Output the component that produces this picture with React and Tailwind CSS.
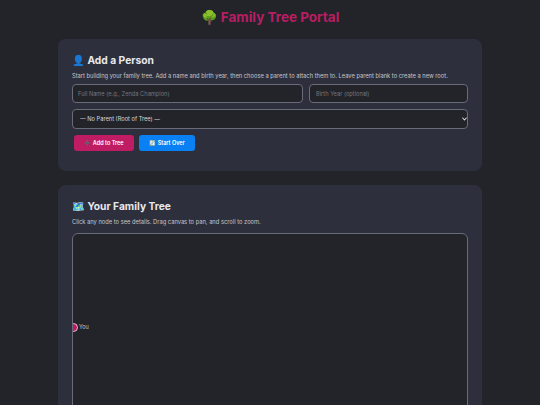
export default function App() {
  return (
    <div className="h-screen overflow-hidden bg-[#23242a] px-[58px] font-['Inter','Liberation_Sans',sans-serif] text-[#e6e6ea]">
      <h1 className="pt-[8px] h-[39px] text-center text-[13.5px] leading-[18px] font-bold text-[#b81d62]">🌳 Family Tree Portal</h1>
      <section className="rounded-[8px] bg-[#2d303c] h-[132px] px-[14px] pt-[14px]">
        <h2 className="text-[10.25px] leading-[14px] font-bold text-[#e8e8ec]">👤 Add a Person</h2>
        <p className="mt-[4px] text-[5.75px] leading-[10px] text-[#c4c5cc] whitespace-nowrap">Start building your family tree. Add a name and birth year, then choose a parent to attach them to. Leave parent blank to create a new root.</p>
        <div className="mt-[3px] flex gap-[6px]">
          <input readOnly placeholder="Full Name (e.g., Zenda Champion)" className="w-[231px] h-[19px] rounded-[4px] border border-[#686b78] bg-[#23242a] px-[5px] text-[5.7px] placeholder:text-[#75767e] outline-none" />
          <input readOnly placeholder="Birth Year (optional)" className="w-[159px] h-[19px] rounded-[4px] border border-[#686b78] bg-[#23242a] px-[6px] text-[5.7px] placeholder:text-[#75767e] outline-none" />
        </div>
        <div className="relative mt-[6px] w-[396px]">
          <select className="block w-full h-[20px] appearance-none rounded-[4px] border border-[#686b78] bg-[#23242a] px-[7px] text-[5.7px] text-[#d8d8dc] outline-none">
            <option>— No Parent (Root of Tree) —</option>
          </select>
          <svg className="absolute right-[1px] top-[8px] h-[4px] w-[5px]" viewBox="0 0 10 8" fill="none" stroke="#d8d8dc" strokeWidth="2.2" strokeLinecap="round" strokeLinejoin="round">
            <path d="M1.5 2 5 6 8.5 2" />
          </svg>
        </div>
        <div className="mt-[6px] ml-[2px] flex gap-[5px]">
          <button className="w-[60px] h-[16px] rounded-[3px] bg-[#c01c64] text-[5.5px] font-semibold text-white">➕ Add to Tree</button>
          <button className="w-[56px] h-[16px] rounded-[3px] bg-[#0a80f5] text-[5.5px] font-semibold text-white">🔄 Start Over</button>
        </div>
      </section>
      <section className="mt-[14px] rounded-[8px] bg-[#2d303c] h-[300px] px-[14px] pt-[14px]">
        <h2 className="text-[10.25px] leading-[14px] font-bold text-[#e8e8ec]">🗺️ Your Family Tree</h2>
        <p className="mt-[4px] text-[5.75px] leading-[10px] text-[#c4c5cc]">Click any node to see details. Drag canvas to pan, and scroll to zoom.</p>
        <div className="relative mt-[6px] h-[300px] overflow-hidden rounded-[6px] border border-[#686b78] bg-[#23242a]">
          <span className="absolute left-[-4px] top-[89px] h-[9px] w-[9px] rounded-full border border-[#e8b4cc] bg-[#c01c64]"></span>
          <span className="absolute left-[6px] top-[89px] text-[5.5px] leading-[9px] text-[#c4c5cc]">You</span>
        </div>
      </section>
    </div>
  );
}
